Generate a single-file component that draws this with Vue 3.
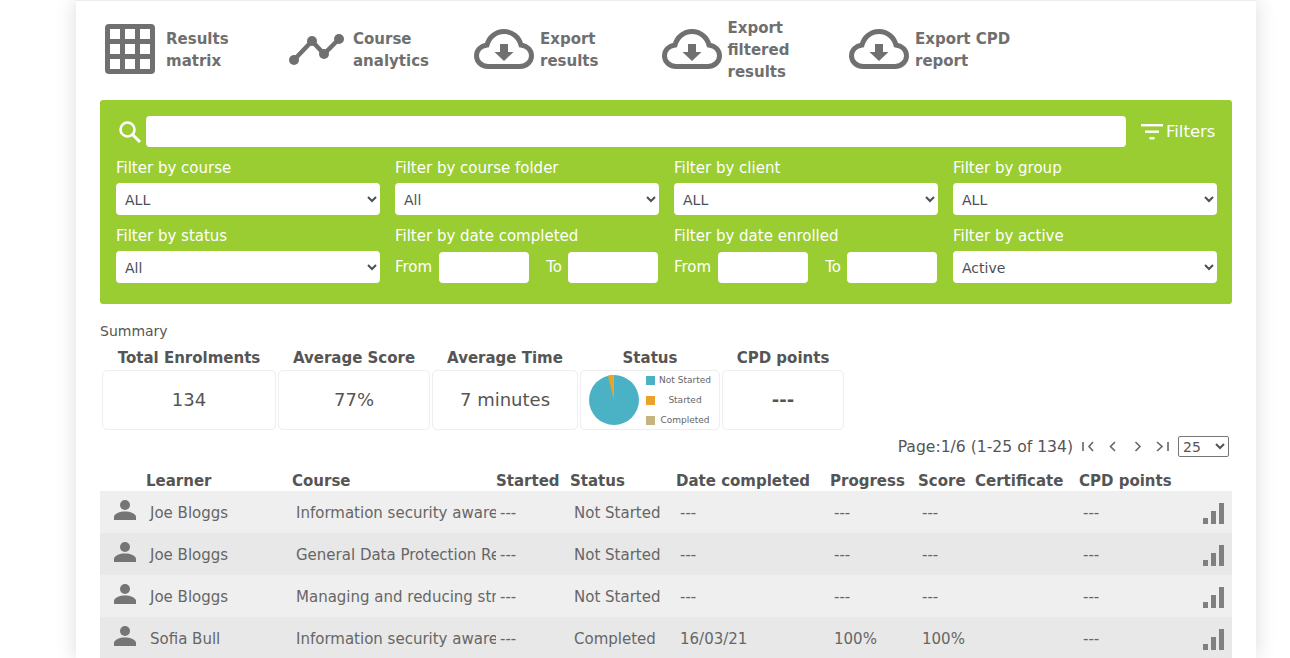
<script setup>
const actions = [
  { icon: 'grid', lines: ['Results', 'matrix'] },
  { icon: 'chart', lines: ['Course', 'analytics'] },
  { icon: 'cloud', lines: ['Export', 'results'] },
  { icon: 'cloud', lines: ['Export', 'filtered', 'results'] },
  { icon: 'cloud', lines: ['Export CPD', 'report'] },
]
const filtersTop = [
  { label: 'Filter by course', value: 'ALL' },
  { label: 'Filter by course folder', value: 'All' },
  { label: 'Filter by client', value: 'ALL' },
  { label: 'Filter by group', value: 'ALL' },
]
const summary = [
  { title: 'Total Enrolments', value: '134', w: 174 },
  { title: 'Average Score', value: '77%', w: 152 },
  { title: 'Average Time', value: '7 minutes', w: 146 },
]
const columns = ['Learner', 'Course', 'Started', 'Status', 'Date completed', 'Progress', 'Score', 'Certificate', 'CPD points']
const rows = [
  ['Joe Bloggs', 'Information security awareness', '---', 'Not Started', '---', '---', '---', '', '---'],
  ['Joe Bloggs', 'General Data Protection Regulation', '---', 'Not Started', '---', '---', '---', '', '---'],
  ['Joe Bloggs', 'Managing and reducing stress', '---', 'Not Started', '---', '---', '---', '', '---'],
  ['Sofia Bull', 'Information security awareness', '---', 'Completed', '16/03/21', '100%', '100%', '', '---'],
]
</script>

<template>
  <div class="page">
    <main class="card">
      <nav class="actions">
        <a v-for="a in actions" :key="a.lines.join()" class="action">
          <span class="action-icon">
            <svg v-if="a.icon === 'grid'" width="50" height="50" viewBox="0 0 50 50">
              <rect width="50" height="50" rx="4" fill="#707070" />
              <template v-for="y in [5, 20, 35]" :key="y">
                <rect v-for="x in [5, 20, 35]" :key="x" :x="x" :y="y" width="10" height="10" fill="#fff" />
              </template>
            </svg>
            <svg v-else-if="a.icon === 'chart'" width="56" height="50" viewBox="0 0 56 50">
              <path d="M6 36 L24 17 L36 30 L51 15" fill="none" stroke="#707070" stroke-width="4.500" />
              <circle cx="6" cy="36" r="5" fill="#707070" />
              <circle cx="24" cy="17" r="5" fill="#707070" />
              <circle cx="36" cy="30" r="5" fill="#707070" />
              <circle cx="51" cy="15" r="5" fill="#707070" />
            </svg>
            <svg v-else width="60" height="50" viewBox="0 0 60 50">
              <path d="M14 42.500 C7 42.500 2.500 37 2.500 32 C2.500 26 7 22 13 21 C15 13 22 7.500 30 7.500 C38 7.500 45 13 47 21 C53 22 57.500 26 57.500 32 C57.500 37 53 42.500 46 42.500 Z" fill="none" stroke="#707070" stroke-width="5" />
              <path d="M26 20 H34 V28 H39.500 L30 37 L20.500 28 H26 Z" fill="#707070" />
            </svg>
          </span>
          <span class="action-text"><span v-for="l in a.lines" :key="l">{{ l }}</span></span>
        </a>
      </nav>

      <section class="panel">
        <div class="search-row">
          <svg class="search-icon" width="24" height="24" viewBox="0 0 24 24">
            <circle cx="9.500" cy="9.500" r="7" fill="none" stroke="#fff" stroke-width="2.600" />
            <path d="M14.500 14.500 L22 22" stroke="#fff" stroke-width="3" />
          </svg>
          <input class="search" type="text" />
          <div class="filters-toggle">
            <svg width="22" height="16" viewBox="0 0 22 16">
              <rect x="0" y="0" width="22" height="2.400" fill="#fff" />
              <rect x="4" y="6.500" width="14" height="2.400" fill="#fff" />
              <rect x="8.500" y="13" width="5" height="2.400" fill="#fff" />
            </svg>
            <span>Filters</span>
          </div>
        </div>
        <div class="filter-grid">
          <label v-for="f in filtersTop" :key="f.label" class="filter">
            <span>{{ f.label }}</span>
            <select class="control"><option>{{ f.value }}</option></select>
          </label>
          <label class="filter">
            <span>Filter by status</span>
            <select class="control"><option>All</option></select>
          </label>
          <div class="filter">
            <span>Filter by date completed</span>
            <div class="dates">
              <span>From</span><input class="control date" type="text" />
              <span class="to">To</span><input class="control date" type="text" />
            </div>
          </div>
          <div class="filter">
            <span>Filter by date enrolled</span>
            <div class="dates">
              <span>From</span><input class="control date" type="text" />
              <span class="to">To</span><input class="control date" type="text" />
            </div>
          </div>
          <label class="filter">
            <span>Filter by active</span>
            <select class="control"><option>Active</option></select>
          </label>
        </div>
      </section>

      <div class="summary-label">Summary</div>
      <section class="summary">
        <div v-for="s in summary" :key="s.title" class="stat" :style="{ width: s.w + 'px' }">
          <h3>{{ s.title }}</h3>
          <div class="stat-box">{{ s.value }}</div>
        </div>
        <div class="stat stat-status">
          <h3>Status</h3>
          <div class="stat-box status-box">
            <svg width="52" height="52" viewBox="0 0 52 52">
              <circle cx="26" cy="26" r="25" fill="#4bb2c5" />
              <path d="M26 26 L20 1.700 A25 25 0 0 1 26 1 Z" fill="#eaa228" />
              <path d="M26 26 L25 1 L26 1 Z" fill="#c5b47f" />
            </svg>
            <ul class="legend">
              <li><i class="s1"></i><span>Not Started</span></li>
              <li><i class="s2"></i><span>Started</span></li>
              <li><i class="s3"></i><span>Completed</span></li>
            </ul>
          </div>
        </div>
        <div class="stat stat-cpd">
          <h3>CPD points</h3>
          <div class="stat-box dashes">---</div>
        </div>
      </section>

      <div class="pager">
        <span>Page:1/6 (1-25 of 134)</span>
        <svg class="pager-icons" width="90" height="14" viewBox="0 0 90 14" fill="none" stroke="#666" stroke-width="1.600">
          <path d="M2 2 V11 M12 2 L8 6.500 L12 11" />
          <path d="M34 2 L29.500 6.500 L34 11" />
          <path d="M54.500 2 L59 6.500 L54.500 11" />
          <path d="M76 2 L81 6.500 L76 11 M87 2 V11" />
        </svg>
        <select class="page-size"><option>25</option></select>
      </div>

      <section class="table">
        <div class="table-row head">
          <span></span>
          <span v-for="c in columns" :key="c" class="cell">{{ c }}</span>
          <span></span>
        </div>
        <div v-for="(r, i) in rows" :key="i" class="table-row body">
          <span class="person">
            <svg width="24" height="24" viewBox="0 0 24 24" fill="#757575">
              <circle cx="12" cy="7" r="5" />
              <path d="M1 22 V19 C1 15.500 7 13.500 12 13.500 C17 13.500 23 15.500 23 19 V22 Z" />
            </svg>
          </span>
          <span v-for="(v, j) in r" :key="j" class="cell">{{ v }}</span>
          <span class="bars"><i class="b1"></i><i class="b2"></i><i class="b3"></i></span>
        </div>
      </section>
    </main>
  </div>
</template>

<style>
html, body { margin: 0; overflow: hidden; background: #fff; }
</style>

<style scoped>
.page {
  height: 658px;
  overflow: hidden;
  font-family: "DejaVu Sans", Verdana, sans-serif;
  font-size: 15px;
  color: #555;
}
.card {
  width: 1132px;
  margin-left: 76px;
  padding: 0 24px;
  min-height: 658px;
  border-top: 1px solid #ececec;
  box-shadow: 0 0 20px rgba(0, 0, 0, 0.14);
}
.actions { display: flex; height: 99px; }
.action { display: flex; align-items: center; width: 187.500px; padding-left: 5px; box-sizing: border-box; }
.action-icon { width: 61px; height: 50px; flex: none; margin-top: -4px; }
.action:nth-child(2) .action-icon { margin-left: -4.500px; width: 65px; }
.action:nth-child(3) .action-icon, .action:nth-child(4) .action-icon, .action:nth-child(5) .action-icon { margin-left: -6px; width: 66px; }
.action-text { display: flex; flex-direction: column; font-weight: 700; color: #6f6f6f; line-height: 22px; font-size: 15px; margin-top: -1px; }

.panel { background: #9acd32; border-radius: 3px; height: 204px; padding: 16px 15px 0 16px; box-sizing: border-box; color: #fff; }
.search-row { display: flex; align-items: center; height: 31px; }
.search-icon { flex: none; margin-left: 2px; width: 24px; }
.search { flex: none; width: 980px; height: 31px; box-sizing: border-box; border: 0; border-radius: 4px; background: #fff; margin-left: 4px; }
.filters-toggle { display: flex; align-items: center; gap: 3px; margin-left: 15px; font-size: 16.500px; }
.filter-grid { display: grid; grid-template-columns: repeat(4, 264px); column-gap: 15px; margin-top: 8px; row-gap: 4px; }
.filter { display: flex; flex-direction: column; height: 64px; line-height: 20px; }
.filter > span { height: 28px; line-height: 26px; }
.control { height: 32px; border: 0; border-radius: 4px; background: #fff; box-sizing: border-box; color: #495057; font: inherit; font-size: 14px; padding: 2px 0 0 5px; }
.dates { display: flex; align-items: center; height: 32px; }
.date { width: 90px; height: 31px; margin-left: 7px; flex: none; }
.to { margin-left: 17px; }
.to + .date { margin-left: 6px; }

.summary-label { margin-top: 19px; font-size: 14px; line-height: 16px; }
.summary { display: flex; margin-left: 2px; gap: 2px; margin-top: 2px; }
.stat h3 { margin: 8px 0 3px; font-size: 15px; font-weight: 700; text-align: center; line-height: 18px; color: #555; white-space: nowrap; }
.stat-box { height: 60px; box-sizing: border-box; border: 1px solid #eee; border-radius: 5px; padding-bottom: 2px; display: flex; align-items: center; justify-content: center; font-size: 18px; }
.stat-status { width: 140px; }
.stat-cpd { width: 122px; }
.dashes { font-weight: 700; }
.status-box { justify-content: flex-start; padding: 0 0 0 7px; }
.legend { list-style: none; margin: 0 0 0 6px; padding: 0; font-size: 9px; color: #666; }
.legend li { display: flex; align-items: center; height: 20px; width: 69px; }
.legend i { width: 9px; height: 9px; flex: none; }
.legend span { flex: 1; text-align: center; }
.s1 { background: #4bb2c5; }
.s2 { background: #eaa228; }
.s3 { background: #c5b47f; }

.pager { display: flex; justify-content: flex-end; align-items: center; height: 21px; margin-top: 6px; padding-right: 3px; font-size: 15.600px; }
.pager-icons { margin: 0 7px 0 8px; }
.page-size { width: 51px; height: 21px; font: inherit; font-size: 14px; color: #555; background: #fff; border: 1px solid #767676; border-radius: 2px; padding: 0; }

.table { margin-top: 12px; }
.table-row {
  display: grid;
  grid-template-columns: 42px 146px 204px 74px 106px 154px 88px 57px 104px 115px 42px;
}
.cell { padding: 0 4px; overflow: hidden; white-space: nowrap; }
.head { height: 22px; line-height: 24px; font-weight: 700; }
.body { height: 42px; align-items: center; background: #efefef; color: #666; }
.body:nth-child(odd) { background: #e8e8e8; }
.body .cell { padding: 2px 0 0 8px; margin-right: -4px; }
.person { display: flex; justify-content: center; margin: -4px 0 0 8px; }
.bars { display: flex; align-items: flex-end; gap: 3px; height: 21px; margin-left: 13px; margin-top: 3px; }
.bars i { width: 5px; flex: none; background: #808080; }
.b1 { height: 6px; }
.b2 { height: 13px; }
.b3 { height: 21px; }
</style>
